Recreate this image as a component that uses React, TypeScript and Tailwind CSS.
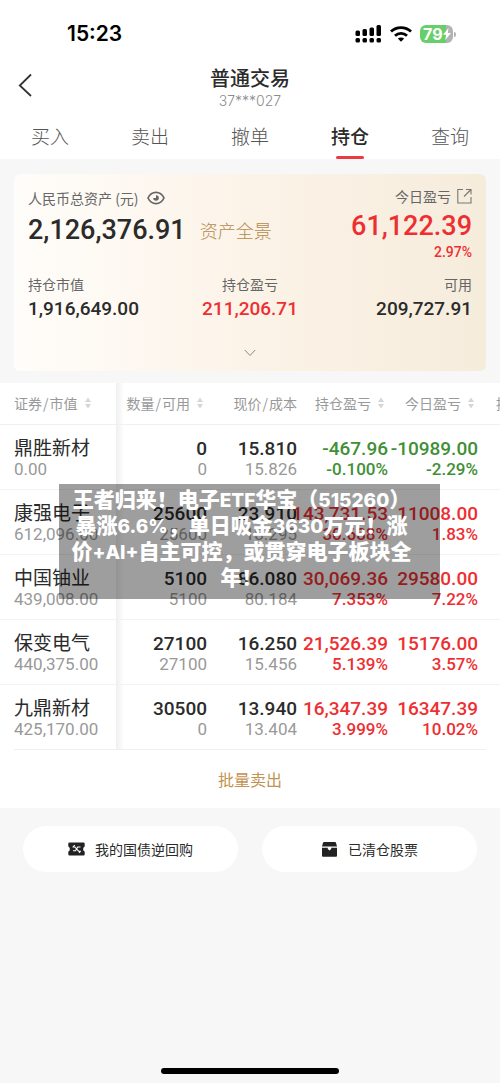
import React from "react";

type Tone = "up" | "down";

interface Holding {
  name: string;
  value: string;
  qty: string;
  available: string;
  price: string;
  cost: string;
  profit: string;
  profitRate: string;
  today: string;
  todayRate: string;
  tone: Tone;
}

const holdings: Holding[] = [
  { name: "鼎胜新材", value: "0.00", qty: "0", available: "0", price: "15.810", cost: "15.826", profit: "-467.96", profitRate: "-0.100%", today: "-10989.00", todayRate: "-2.29%", tone: "down" },
  { name: "康强电子", value: "612,096.00", qty: "25600", available: "25600", price: "23.910", cost: "18.295", profit: "143,731.53", profitRate: "30.688%", today: "11008.00", todayRate: "1.83%", tone: "up" },
  { name: "中国铀业", value: "439,008.00", qty: "5100", available: "5100", price: "86.080", cost: "80.184", profit: "30,069.36", profitRate: "7.353%", today: "29580.00", todayRate: "7.22%", tone: "up" },
  { name: "保变电气", value: "440,375.00", qty: "27100", available: "27100", price: "16.250", cost: "15.456", profit: "21,526.39", profitRate: "5.139%", today: "15176.00", todayRate: "3.57%", tone: "up" },
  { name: "九鼎新材", value: "425,170.00", qty: "30500", available: "0", price: "13.940", cost: "13.404", profit: "16,347.39", profitRate: "3.999%", today: "16347.39", todayRate: "10.02%", tone: "up" },
];

const tabs = ["买入", "卖出", "撤单", "持仓", "查询"];

function StatusBar() {
  return (
    <div className="flex h-14 items-end justify-between pb-2 pl-[67px] pr-11">
      <span className="font-['Inter',sans-serif] text-[21px] leading-7 font-semibold text-black">15:23</span>
      <div className="flex h-7 items-center gap-2">
        <svg width="27" height="18" viewBox="0 0 27 18" aria-hidden="true">
          <rect x="0.5" y="5.5" width="4.5" height="5.5" rx="1.5" />
          <rect x="7.5" y="4" width="4.5" height="7" rx="1.5" />
          <rect x="14.5" y="2.5" width="4.5" height="8.5" rx="1.5" />
          <rect x="21.5" y="0" width="4.5" height="11" rx="1.5" />
          <rect x="0.5" y="13" width="4.5" height="4.5" rx="1.5" />
          <rect x="7.5" y="13" width="4.5" height="4.5" rx="1.5" />
          <rect x="14.5" y="13" width="4.5" height="4.5" rx="1.5" />
          <rect x="21.5" y="13" width="4.5" height="4.5" rx="1.5" />
        </svg>
        <svg width="22" height="16" viewBox="0 0 22 16" fill="none" stroke="#000" strokeWidth="2.8" aria-hidden="true">
          <path d="M1 5.6C6.5 0.2 15.5 0.2 21 5.6" />
          <path d="M5 9.8c3.4-3.2 8.6-3.2 12 0" />
          <path d="M7.8 12.6c1.8-1.6 4.6-1.6 6.4 0L11 15.8z" fill="#000" stroke="none" />
        </svg>
        <div className="flex items-center gap-px">
          <div className="flex h-[18px] w-[33px] items-center rounded-md bg-linear-to-r from-[#66cf6a] from-78% to-[#b3b3b3] to-78% pl-[3px]">
            <span className="font-['Inter',sans-serif] text-base leading-[18px] font-bold text-white">79</span>
            <svg width="8" height="12" viewBox="0 0 8 12" fill="#fff" aria-hidden="true">
              <path d="M5.5 0L0 6.8h3.1L2.2 12 8 4.9H4.8z" />
            </svg>
          </div>
          <div className="h-[5px] w-0.5 rounded-r bg-[#b3b3b3]" />
        </div>
      </div>
    </div>
  );
}

function Sorter() {
  return (
    <svg width="6" height="12" viewBox="0 0 6 12" fill="#d6d6d6" aria-hidden="true">
      <path d="M3 0.5L6 5H0zM3 11.5L0 7h6z" />
    </svg>
  );
}

function Header() {
  return (
    <header className="bg-white">
      <StatusBar />
      <div className="grid grid-cols-[1fr_auto_1fr] items-start pt-2">
        <button type="button" aria-label="返回" className="flex w-8 justify-end pt-[9px]">
          <svg width="14" height="24" viewBox="0 0 14 24" fill="none" stroke="#333" strokeWidth="1.8" aria-hidden="true">
            <path d="M13 1.5L1.8 12.5 13 23" />
          </svg>
        </button>
        <div className="text-center">
          <h1 className="text-xl leading-7 font-medium text-[#2b2b2b]">普通交易</h1>
          <p className="font-['Inter',sans-serif] text-sm leading-[18px] font-light text-[#8c8c8c]">37***027</p>
        </div>
      </div>
      <nav className="grid h-[49px] grid-cols-5">
        {tabs.map((tab) =>
          tab === "持仓" ? (
            <a key={tab} href="#" aria-current="page" className="flex flex-col items-center justify-between pt-3 text-[19px] leading-7 font-medium text-[#2b2b2b]">
              {tab}
              <span className="h-[3px] w-7 rounded-full bg-[#ea3a42]" />
            </a>
          ) : (
            <a key={tab} href="#" className="pt-3 text-center text-[19px] leading-7 font-light text-[#555]">
              {tab}
            </a>
          )
        )}
      </nav>
    </header>
  );
}

function Summary() {
  return (
    <section className="mx-3.5 mt-[15px] rounded-md bg-linear-to-r from-[#fffdfa] via-[#fcf3e8] to-[#f6ecdc] px-3.5">
      <div className="flex justify-between pt-3">
        <div className="pt-0.5">
          <div className="flex items-center gap-2 text-sm leading-5 text-[#666]">
            <span>人民币总资产 (元)</span>
            <svg width="18" height="14" viewBox="0 0 18 14" fill="none" stroke="#666" strokeWidth="1.7" aria-hidden="true">
              <path d="M1 7C4.5-0.4 13.5-0.4 17 7 13.500 14.400 4.500 14.400 1 7z" />
              <path d="M9 4.200A2.800 2.800 0 1 1 6.200 7H9z" fill="#666" stroke="none" />
            </svg>
          </div>
          <div className="flex items-center gap-3.5 pt-1">
            <span className="font-['Roboto',sans-serif] text-[27px] leading-9 font-medium text-[#2b2b2b]">2,126,376.91</span>
            <a href="#" className="text-lg leading-9 font-light text-[#b48a4e]">资产全景</a>
          </div>
        </div>
        <div className="flex flex-col items-end">
          <a href="#" className="flex items-center gap-1.5 text-sm leading-5 text-[#666]">
            今日盈亏
            <svg width="15" height="16" viewBox="0 0 15 16" fill="none" stroke="#777" strokeWidth="1.1" aria-hidden="true">
              <path d="M6 1.500H0.800V15H14V9M9 1.500h5v5M14 1.500L7 8.500" />
            </svg>
          </a>
          <span className="pt-0.5 font-['Roboto',sans-serif] text-[27px] leading-9 font-medium text-[#ee2f32]">61,122.39</span>
          <span className="font-['Roboto',sans-serif] text-sm leading-4 font-medium text-[#ee2f32]">2.97%</span>
        </div>
      </div>
      <dl className="grid grid-cols-3 pt-3.5">
        <div>
          <dt className="text-sm leading-5 text-[#666]">持仓市值</dt>
          <dd className="font-['Roboto',sans-serif] text-[19px] leading-[30px] font-medium text-[#2b2b2b]">1,916,649.00</dd>
        </div>
        <div className="text-center">
          <dt className="text-sm leading-5 text-[#666]">持仓盈亏</dt>
          <dd className="font-['Roboto',sans-serif] text-[19px] leading-[30px] font-medium text-[#ee2f32]">211,206.71</dd>
        </div>
        <div className="text-right">
          <dt className="text-sm leading-5 text-[#666]">可用</dt>
          <dd className="font-['Roboto',sans-serif] text-[19px] leading-[30px] font-medium text-[#2b2b2b]">209,727.91</dd>
        </div>
      </dl>
      <button type="button" aria-label="展开" className="flex h-[47px] w-full items-center justify-center pt-2.5">
        <svg width="12" height="8" viewBox="0 0 12 8" fill="none" stroke="#888" strokeWidth="1" aria-hidden="true">
          <path d="M0.800 1L6 6.500 11.200 1" />
        </svg>
      </button>
    </section>
  );
}

interface CellProps {
  main: string;
  sub: string;
  mainClass: string;
  subClass: string;
}

function NumberCell({ main, sub, mainClass, subClass }: CellProps) {
  return (
    <div className="flex flex-col items-end font-['Roboto',sans-serif] whitespace-nowrap">
      <span className={`text-[19px] leading-6 font-medium ${mainClass}`}>{main}</span>
      <span className={`text-[17px] leading-4 ${subClass}`}>{sub}</span>
    </div>
  );
}

function Pair({ first, second }: { first: string; second: string }) {
  return (
    <span>
      {first}
      <span className="mx-px">/</span>
      {second}
    </span>
  );
}

const columnEdge = "bg-linear-to-r from-[#efefef] to-white bg-size-[8px_100%] bg-no-repeat";

function Holdings() {
  return (
    <table className="w-[588px] table-fixed border-collapse">
      <colgroup>
        <col className="w-[116px]" />
        <col className="w-[91px]" />
        <col className="w-[90px]" />
        <col className="w-[91px]" />
        <col className="w-[90px]" />
        <col className="w-[110px]" />
      </colgroup>
      <thead>
        <tr className="h-[41px] border-b border-[#f0f0f0] text-sm whitespace-nowrap text-[#999]">
          <th className="pl-3.5 font-normal">
            <div className="flex items-center gap-[7px]"><Pair first="证券" second="市值" /><Sorter /></div>
          </th>
          <th className={`pr-1 font-normal ${columnEdge}`}>
            <div className="flex items-center justify-end gap-[7px]"><Pair first="数量" second="可用" /><Sorter /></div>
          </th>
          <th className="font-normal">
            <div className="flex justify-end"><Pair first="现价" second="成本" /></div>
          </th>
          <th className="pr-1 font-normal">
            <div className="flex items-center justify-end gap-[7px]">持仓盈亏<Sorter /></div>
          </th>
          <th className="pr-1 font-normal">
            <div className="flex items-center justify-end gap-[7px]">今日盈亏<Sorter /></div>
          </th>
          <th className="pl-[18px] text-left font-normal">持股天数</th>
        </tr>
      </thead>
      <tbody>
        {holdings.map((h) => {
          const tone = h.tone === "up" ? "text-[#ee2f32]" : "text-[#3f8f36]";
          return (
            <tr key={h.name} className="h-[65px] border-b border-[#f3f3f3] last:border-0">
              <td className="pl-3.5">
                <div className="flex flex-col whitespace-nowrap">
                  <span className="text-[19px] leading-6 text-[#2b2b2b]">{h.name}</span>
                  <span className="font-['Roboto',sans-serif] text-[17px] leading-5 text-[#999]">{h.value}</span>
                </div>
              </td>
              <td className={columnEdge}>
                <NumberCell main={h.qty} sub={h.available} mainClass="text-[#2b2b2b]" subClass="text-[#999]" />
              </td>
              <td>
                <NumberCell main={h.price} sub={h.cost} mainClass="text-[#2b2b2b]" subClass="text-[#999]" />
              </td>
              <td>
                <NumberCell main={h.profit} sub={h.profitRate} mainClass={tone} subClass={`font-medium ${tone}`} />
              </td>
              <td>
                <NumberCell main={h.today} sub={h.todayRate} mainClass={tone} subClass={`font-medium ${tone}`} />
              </td>
              <td />
            </tr>
          );
        })}
      </tbody>
    </table>
  );
}

function Latin({ children }: { children: string }) {
  return <span className="font-['Inter',sans-serif] text-[19px] leading-[26px] font-extrabold">{children}</span>;
}

function Caption() {
  return (
    <div className="absolute right-[60px] left-[59px] top-[101px] flex h-[115px] flex-col items-center bg-black/38 pt-px pr-4 text-[21px] leading-[26px] font-black whitespace-nowrap text-white">
      <p className="h-[26px]">王者归来！电子<Latin>ETF</Latin>华宝（<Latin>515260</Latin>）</p>
      <p className="h-[26px]">暴涨<Latin>6.6%</Latin>，单日吸金<Latin>3630</Latin>万元！涨</p>
      <p className="h-[26px]">价<Latin>+AI+</Latin>自主可控，或贯穿电子板块全</p>
      <p className="h-[26px]">年！</p>
    </div>
  );
}

export default function App() {
  return (
    <div className="flex min-h-screen flex-col bg-[#f7f7f7] font-['Noto_Sans_CJK_SC',sans-serif]">
      <Header />
      <main>
        <Summary />
        <section className="relative mt-3 bg-white">
          <div className="overflow-x-hidden">
            <Holdings />
          </div>
          <div className="mx-3.5 border-t border-[#f0f0f0]">
            <button type="button" className="block h-[58px] w-full text-base text-[#c39350]">批量卖出</button>
          </div>
          <Caption />
        </section>
        <div className="grid grid-cols-2 gap-6 px-[23px] pt-[18px]">
          <button type="button" className="flex h-[46px] items-center justify-center gap-2.5 rounded-full bg-white text-sm text-[#2b2b2b]">
            <svg width="17" height="14" viewBox="0 0 17 14" aria-hidden="true">
              <path d="M1.500 0.500h14a1.200 1.200 0 0 1 1.200 1.200v2.700c-2 .8-2 4.400 0 5.200v2.700a1.200 1.200 0 0 1-1.200 1.200h-14a1.200 1.200 0 0 1-1.200-1.200V9.600c2-.8 2-4.400 0-5.200V1.700A1.200 1.200 0 0 1 1.500 0.500z" fill="#222" />
              <path d="M4.500 5h2.300l3.800 4.200h2.200M6.800 3L5 5M12.500 5h-2.800L7.500 8.700H5M11 10.800l1.700-1.600" fill="none" stroke="#fff" strokeWidth="1.1" />
            </svg>
            我的国债逆回购
          </button>
          <button type="button" className="flex h-[46px] items-center justify-center gap-2.5 rounded-full bg-white text-sm text-[#2b2b2b]">
            <svg width="17" height="15" viewBox="0 0 17 15" fill="#222" aria-hidden="true">
              <path d="M3 0h11a1 1 0 0 1 .9.600L16 4.500H1L2.100 0.600A1 1 0 0 1 3 0z" />
              <path d="M1 5.700h5.800v1.200L8.500 8.400l1.700-1.500V5.700H16v8a1 1 0 0 1-1 1H2a1 1 0 0 1-1-1z" />
            </svg>
            已清仓股票
          </button>
        </div>
      </main>
      <footer className="mt-auto flex justify-center pb-[9px]">
        <div className="h-1.5 w-[178px] rounded-full bg-black" />
      </footer>
    </div>
  );
}
